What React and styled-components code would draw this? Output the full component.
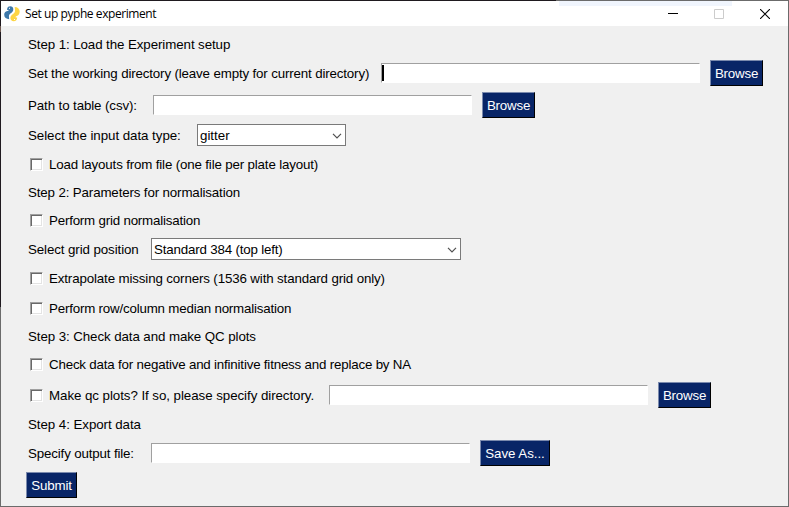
import React from "react";
import styled, { createGlobalStyle } from "styled-components";

const GlobalStyle = createGlobalStyle`
  body { margin: 0; background: #f0f0f0; }
  *, *::before, *::after { box-sizing: border-box; }
`;

const Window = styled.div`
  position: relative;
  width: 789px;
  height: 507px;
  overflow: hidden;
  background: #f0f0f0;
  border: 1px solid #6b6b6b;
  border-top: 0;
  border-left: 0;
  display: grid;
  grid-template-rows: 26px 1fr;
  font-family: "Liberation Sans", Arial, sans-serif;
  font-size: 13.333px;
  color: #000;
`;

const TopEdge = styled.div`
  position: absolute;
  inset: 0 -1px auto 0;
  height: 1px;
  background: linear-gradient(90deg, #1f1a1f 556px, #6b6b6b 556px);
`;

const LeftEdge = styled.div`
  position: absolute;
  inset: 0 auto -1px 0;
  width: 1px;
  background: linear-gradient(#1f1a1f 26px, #6f5a50 26px 32px, #1f1a1f 32px 307px, #6b6b6b 307px);
`;

const Sheen = styled.div`
  position: absolute;
  top: 1px;
  left: 559px;
  width: 173px;
  height: 5px;
  background: #f0f5fd;
`;

const TitleBar = styled.header`
  display: flex;
  align-items: center;
  padding: 1px 0 0 4px;
  background: #fff;
`;

const Title = styled.span`
  flex: 1;
  margin-left: 5px;
  font: 12px/16px "Open Sans", "Noto Sans", sans-serif;
  letter-spacing: -0.43px;
  white-space: nowrap;
`;

const WindowButton = styled.button`
  width: 46px;
  height: 25px;
  padding: 0;
  border: 0;
  background: none;
  display: grid;
  place-items: center;
  svg { display: block; }
`;

const Controls = styled.div`
  display: flex;
`;

const Form = styled.main`
  padding: 4px 0 0 26px;
  display: grid;
  grid-template-rows: 28px 30px 34px 26px 32px 24px 32px 26px 32px 28px 28px 28px 34px 24px 34px 30px;
`;

const Row = styled.div`
  display: flex;
  align-items: center;
`;

const Label = styled.label`
  flex: none;
  width: ${(p) => (p.$width ? `${p.$width}px` : "auto")};
  padding: 2px 0 0 2px;
  line-height: 16px;
  white-space: nowrap;
  letter-spacing: ${(p) => p.$track || 0}px;
`;

const CheckText = styled(Label)`
  padding-left: 6px;
`;

const CheckBox = styled.span`
  flex: none;
  width: 13px;
  height: 13px;
  margin: 1px 0 0 4px;
  background: #fff;
  border: 1px solid;
  border-color: #a0a0a0 #fff #fff #a0a0a0;
  box-shadow: inset 1px 1px #696969, inset -1px -1px #e3e3e3;
`;

const Field = styled.div`
  flex: none;
  width: 319px;
  height: 20px;
  margin-right: 10px;
  background: #fff;
  border: 1px solid;
  border-color: #a0a0a0 #fff #fff #a0a0a0;
  display: flex;
  align-items: center;
`;

const Caret = styled.span`
  width: 2px;
  height: 16px;
  background: #000;
`;

const Button = styled.button`
  flex: none;
  width: ${(p) => p.$width || 53}px;
  height: 26px;
  padding: 2px 0 0;
  background: #082567;
  color: #fff;
  border: 1px solid;
  border-color: #7b8aad #000 #000 #7b8aad;
  font: inherit;
  line-height: 16px;
  letter-spacing: ${(p) => p.$track ?? -0.2}px;
  white-space: nowrap;
`;

const Select = styled.div`
  flex: none;
  width: ${(p) => p.$width}px;
  height: 22px;
  padding: 2px 3px 0 2px;
  background: #fff;
  border: 1px solid #7a7a7a;
  display: flex;
  align-items: center;
  justify-content: space-between;
  line-height: 16px;
  white-space: nowrap;
  letter-spacing: ${(p) => p.$track || 0}px;
`;

const Logo = () => (
  <svg width="16" height="16" viewBox="0 0 16 16">
    <path fill="#3d78aa" d="M3.200 2.500C3.500 1 4.700.3 6.200.3 8.200.3 9.300 1.500 9.300 3.200 9.300 5.400 8 6.500 6.400 7.600 5.200 8.500 4.800 9.500 5 11.200L5.200 13.200C2.400 13.200.2 11.700.2 8.800.2 6.500 1.500 5 4.500 4.800V4H3.100z" />
    <path fill="#fdd545" d="M10.700.9C13.500 1 15.700 2.700 15.700 5.600c0 2.600-1.400 4.500-4 5v.9h1.500c0 2.300-1.400 3.700-3.500 3.700-2 0-3.300-1.200-3.300-3.200 0-2 1.100-3 2.700-4.100C10.700 6.800 11.200 5.700 11 4z" />
    <path stroke="#fff" d="M5 2.300h1M10 13.500h1" />
  </svg>
);

const Chevron = () => (
  <svg width="10" height="6" viewBox="0 0 10 6">
    <path d="M1 .8l4 4 4-4" fill="none" stroke="#505050" strokeWidth="1.200" />
  </svg>
);

const Check = ({ children, width, track }) => (
  <>
    <CheckBox role="checkbox" aria-checked="false" />
    <CheckText $width={width} $track={track}>{children}</CheckText>
  </>
);

export default function App() {
  return (
    <>
      <GlobalStyle />
      <Window>
        <TitleBar>
          <Logo />
          <Title>Set up pyphe experiment</Title>
          <Controls>
            <WindowButton aria-label="Minimize">
              <svg width="10" height="10"><path d="M0 4.500h10" stroke="#000" /></svg>
            </WindowButton>
            <WindowButton aria-label="Maximize">
              <svg width="10" height="10"><path d="M.5.5h9v9h-9z" fill="none" stroke="#ccc" /></svg>
            </WindowButton>
            <WindowButton aria-label="Close">
              <svg width="10" height="10"><path d="M0 0l10 10M10 0L0 10" stroke="#000" strokeWidth="1.100" /></svg>
            </WindowButton>
          </Controls>
        </TitleBar>
        <Form>
          <Row><Label $track={-0.09}>Step 1: Load the Experiment setup</Label></Row>
          <Row>
            <Label $width={355} $track={-0.15}>Set the working directory (leave empty for current directory)</Label>
            <Field><Caret /></Field>
            <Button>Browse</Button>
          </Row>
          <Row>
            <Label $width={127} $track={-0.11}>Path to table (csv):</Label>
            <Field />
            <Button>Browse</Button>
          </Row>
          <Row>
            <Label $width={171} $track={-0.05}>Select the input data type:</Label>
            <Select $width={149}>gitter<Chevron /></Select>
          </Row>
          <Row><Check track={-0.16}>Load layouts from file (one file per plate layout)</Check></Row>
          <Row><Label $track={-0.14}>Step 2: Parameters for normalisation</Label></Row>
          <Row><Check track={-0.2}>Perform grid normalisation</Check></Row>
          <Row>
            <Label $width={125} $track={-0.1}>Select grid position</Label>
            <Select $width={310} $track={-0.18}>Standard 384 (top left)<Chevron /></Select>
          </Row>
          <Row><Check track={-0.135}>Extrapolate missing corners (1536 with standard grid only)</Check></Row>
          <Row><Check track={-0.19}>Perform row/column median normalisation</Check></Row>
          <Row><Label $track={-0.09}>Step 3: Check data and make QC plots</Label></Row>
          <Row><Check track={-0.19}>Check data for negative and infinitive fitness and replace by NA</Check></Row>
          <Row>
            <Check width={286} track={-0.06}>Make qc plots? If so, please specify directory.</Check>
            <Field />
            <Button>Browse</Button>
          </Row>
          <Row><Label $track={-0.06}>Step 4: Export data</Label></Row>
          <Row>
            <Label $width={125} $track={-0.15}>Specify output file:</Label>
            <Field />
            <Button $width={70} $track={-0.05}>Save As...</Button>
          </Row>
          <Row><Button $width={51} $track={-0.15}>Submit</Button></Row>
        </Form>
        <Sheen />
        <TopEdge />
        <LeftEdge />
      </Window>
    </>
  );
}
